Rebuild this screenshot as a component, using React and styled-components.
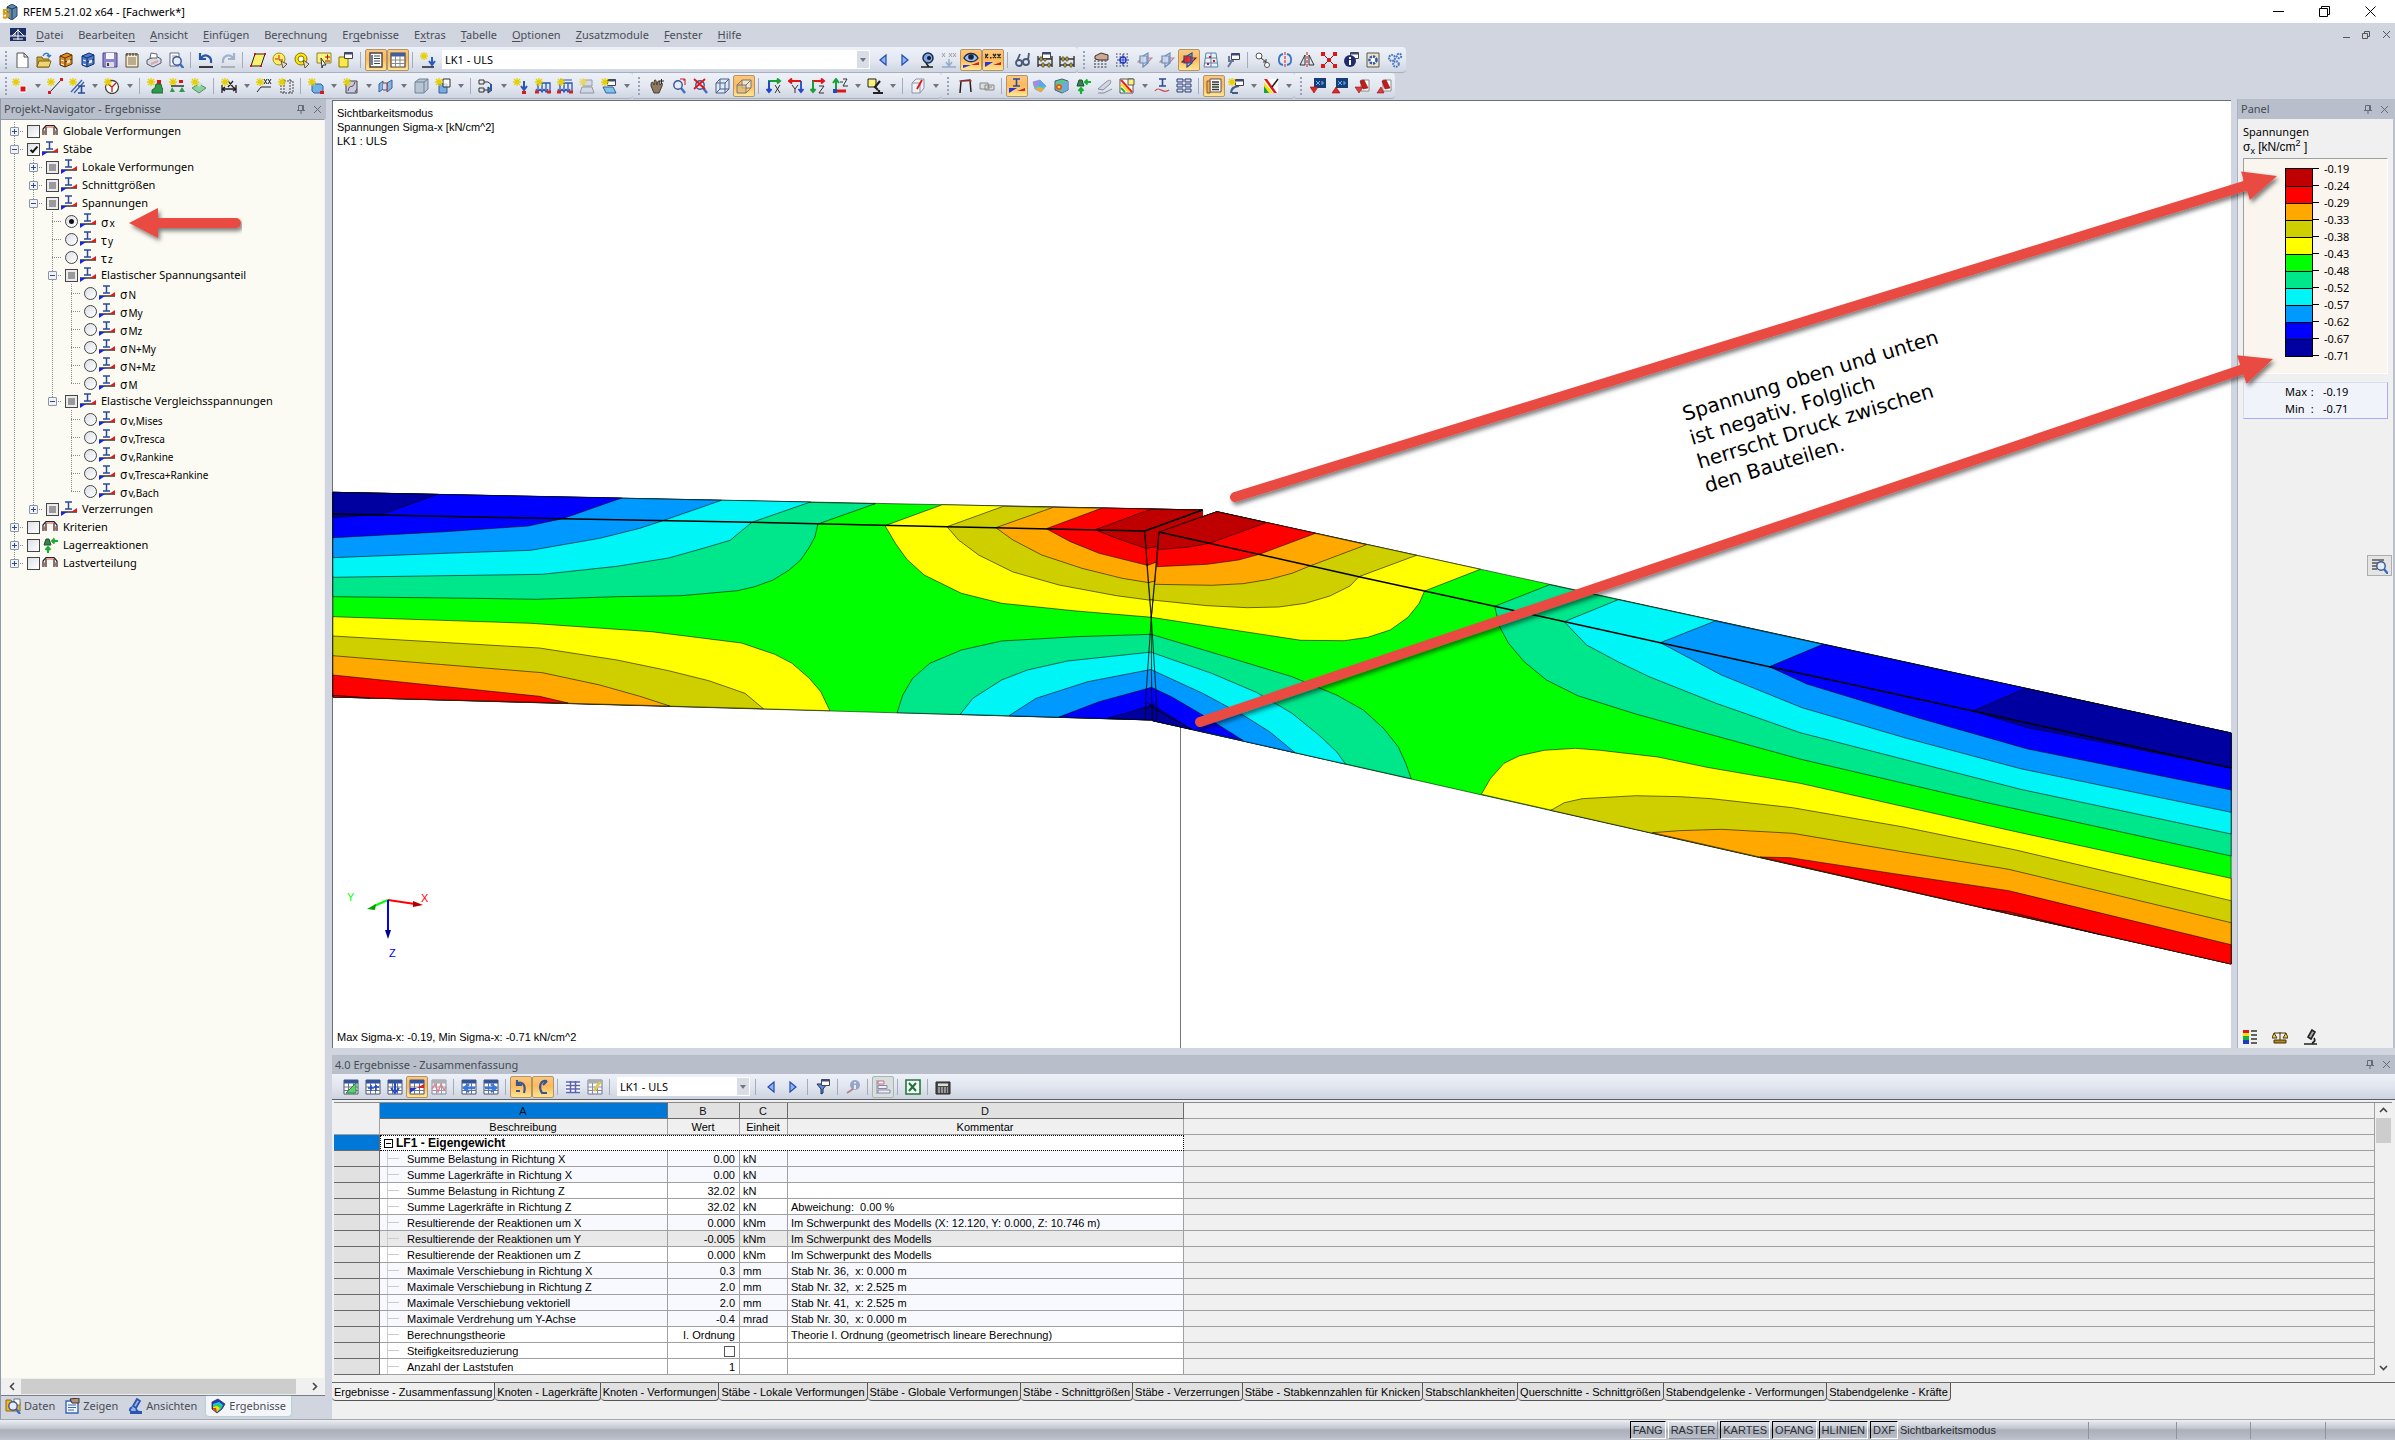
import React, { Fragment } from "react";
import styled, { createGlobalStyle, css } from "styled-components";

const UI = '"Noto Sans", "Open Sans", sans-serif';
const ARIAL = '"Liberation Sans", Arial, sans-serif';

const Global = createGlobalStyle`
  *, *::before, *::after { box-sizing: border-box; }
  html, body, #root { height: 100%; }
  body { margin: 0; overflow: hidden; background: #d0d5df; font: 11px/16px ${UI}; color: #111; }
  button, input, select { font: inherit; color: inherit; margin: 0; padding: 0; }
`;

/* ---------- icons ---------- */

const Star = () => <path d="M4 0v8M0 4h8M1 1l6 6M7 1l-6 6" stroke="#e6cf00" strokeWidth="1.3" fill="none" />;
const Ibeam = ({ x = 0, y = 0 }) => <path transform={`translate(${x} ${y})`} d="M0 0h7M3.5 0v7M0 7h7" stroke="#2b4a9a" strokeWidth="1.6" fill="none" />;
const Lens = ({ x = 8, y = 7 }) => (
  <g>
    <path d={`M${x + 3} ${y + 3}l4 5`} stroke="#3d6fc8" strokeWidth="2.4" />
    <circle cx={x} cy={y} r="4.2" fill="#e4edfb" stroke="#3b5596" strokeWidth="1.4" />
  </g>
);
const Grid = ({ hot = "#33549c" }) => (
  <g>
    <path d="M1 1h14v14H1z" fill="#fff" stroke="#4a5670" />
    <path d="M1 1h14v3.500H1z" fill={hot} />
    <path d="M1 8h14M1 11.500h14M5.500 4v11M10.500 4v11" stroke="#69748c" strokeWidth="1" />
  </g>
);
const Axes = ({ a, b }) => (
  <g fill="none" strokeWidth="2">
    <path d="M2 3h12M11 0.500l3 2.500-3 2.500" stroke={a} />
    <path d="M3 3v11M0.500 11l2.500 3 2.500-3" stroke={b} />
  </g>
);
const Load = () => (
  <g fill="none" strokeWidth="1.3">
    <path d="M3 5h12v8M3 5v8M7 5v8M11 5v8" stroke="#2a55b8" />
    <path d="M1 11l2 3 2-3M5 11l2 3 2-3M9 11l2 3 2-3" stroke="#2a55b8" />
    <path d="M0 14h4M12 14h4" stroke="#d42020" strokeWidth="3" />
  </g>
);
const Window = ({ x = 7, y = 0 }) => (
  <g transform={`translate(${x} ${y})`}>
    <path d="M.5 .5h8v6h-8z" fill="#fff" stroke="#444" />
    <path d="M.5 .5h8v2h-8z" fill="#3c4a78" />
  </g>
);
const Cabinet = ({ c, d }) => (
  <g>
    <path d="M2 4l7-3 5 2v9l-7 3-5-2z" fill={c} stroke={d} />
    <path d="M7 6l7-3M7 6v9M2 4l5 2M7 10l7-3" stroke={d} fill="none" />
    <path d="M3 8l3 1M3 12l3 1" stroke="#fff" />
    <path d="M9 8.500l3-1v3l-3 1z" fill="#f4e6d0" />
  </g>
);
const Planes = ({ hot, dim }) => (
  <g opacity={dim ? 0.6 : 1} strokeWidth="1.2" fillOpacity=".85">
    <path d="M1 10l4-4h10l-4 4z" fill={hot ? "#f0a8a0" : "#f0b8b0"} stroke={hot ? "#702020" : "#a05050"} />
    <path d="M6 4l5-3v10l-5 4z" fill={hot ? "#aecbf0" : "#c9dbef"} stroke="#284b8e" />
    <path d="M3 4h7v7H3z" fill={hot ? "#f01818" : "#bcd4f2"} stroke="#284b8e" />
  </g>
);
const Frame = () => (
  <g fill="none">
    <path d="M1 12V6l3-3.500h8L15 6v6" stroke="#222" strokeWidth="1.2" />
    <path d="M4 12V4M12 12V4" stroke="#222" strokeWidth="1.2" />
    <path d="M4 4h8M2 12l1-5M14 12l-1-5" stroke="#d45050" strokeWidth="1" />
  </g>
);
const Abacus = () => (
  <g>
    <path d="M1 15V4M15 15V4M1 7h14M1 13h14" stroke="#333" strokeWidth="1.4" fill="none" />
    <path d="M3 5h2v4H3zM7 5h2v4H7zM11 11h2v4h-2zM5 11h2v4H5z" fill="#e9c91c" stroke="#3a3a3a" strokeWidth=".7" />
  </g>
);
const Module = ({ up }) => (
  <g>
    <path d="M4 0h12v10H4z" fill="#173d78" />
    <path d="M6 3l4 4M10 3l-4 4M12 3v4M12 5h2" stroke="#67b5f0" fill="none" />
    <path d={up ? "M0 15l4-6 4 6z" : "M0 9h8l-4 6z"} fill="#e02525" stroke="#8d1111" strokeWidth=".6" />
  </g>
);
const Pdf = ({ up }) => (
  <g>
    <path d="M7 2h8v11H7z" fill="#fff" stroke="#888" />
    <path d="M6 3l4-1 4 8-5 1z" fill="#c81818" stroke="#7c0d0d" strokeWidth=".6" />
    <path d={up ? "M1 15l4-6 3 6z" : "M1 9h8l-4 6z"} fill="#e03a3a" stroke="#8d1111" strokeWidth=".6" />
  </g>
);
const Surface = ({ c = "#6fb2e6" }) => <path d="M4 6h9l2 2v7H6l-2-2z" fill={c} stroke="#33619b" />;
const Tri = ({ left }) => <path d={left ? "M11 3v10L5 8z" : "M5 3v10l6-5z"} fill="#8fb4f4" stroke="#1f4bb0" strokeWidth="1.2" />;

const ICONS = {
  app: <g><path d="M5 3l5-3 5 3v9l-5 4-5-3z" fill="#5f87ad" stroke="#2a4664" /><path d="M5 3l5 2v10M10 5l5-2" stroke="#223a54" fill="none" /><path d="M7 6H2v4c3-2 5 0 4 2s-3 2-5 1" stroke="#d99a10" strokeWidth="2.200" fill="none" /></g>,
  mdi: <g><path d="M0 1h16v13H0z" fill="#1c2f66" /><path d="M0 9h16M8 2v11M8 3L2 9M8 3l6 6M5 6v3M3 12h10" stroke="#fff" fill="none" /></g>,
  fresh: <path d="M3 1h7l4 4v11H3zM10 1v4h4" fill="#fff" stroke="#555" />,
  open: <g><path d="M1 5h5l1 2h6v8H1z" fill="#caa63a" stroke="#7d6514" /><path d="M3 9h12l-2 6H1z" fill="#f0d476" stroke="#7d6514" /><path d="M7 4c2-4 6-3 6 0M11 3l2 2 2-2" stroke="#3a79c8" strokeWidth="1.500" fill="none" /></g>,
  boxO: <Cabinet c="#dd8c28" d="#5f3306" />,
  boxB: <Cabinet c="#4a7ad0" d="#14306e" />,
  save: <g><path d="M1 1h14v14H1z" fill="#8d86cc" stroke="#4c458a" /><path d="M4 1h8v6H4z" fill="#f5f5fb" /><path d="M4 10h8v5H4z" fill="#dcdce8" /><path d="M5 11h2v3H5z" fill="#444" /></g>,
  notes: <g><path d="M2 2h12v13H2z" fill="#f7ecd0" stroke="#5a4b30" /><path d="M4 6h8M4 8h8M4 10h8M4 12h8" stroke="#7c6c4c" /><path d="M3 1v3M6 1v3M9 1v3M12 1v3" stroke="#333" /></g>,
  print: <g><path d="M1 8l9-4 5 3v4l-8 4-6-3z" fill="#d8dae4" stroke="#55586a" /><path d="M4 6l1-5 6 1 0 4z" fill="#fff" stroke="#666" /><path d="M5 12l7-3" stroke="#d8a8a8" strokeWidth="2" /></g>,
  preview: <g><path d="M2 1h9v13H2z" fill="#fff" stroke="#667" /><path d="M4 4h5M4 6h5" stroke="#999" /><Lens x={9} y={9} /></g>,
  undo: <g><path d="M2 1v6h6M3 6c4-5 11-2 10 5" fill="none" stroke="#2456a8" strokeWidth="2.200" /><path d="M1 15h14" stroke="#111" strokeWidth="1.600" /></g>,
  redo: <g opacity=".55"><path d="M14 1v6H8M13 6C9 1 2 4 3 11" fill="none" stroke="#6b86b0" strokeWidth="2.200" /><path d="M1 15h14" stroke="#777" strokeWidth="1.600" /></g>,
  para: <g><path d="M5 2h10l-4 12H1z" fill="#fbf06e" stroke="#222" /><path d="M4 1h2v2H4zM14 1h2v2h-2zM10 13h2v2h-2zM0 13h2v2H0z" fill="#e01515" /></g>,
  spot: <g><circle cx="7" cy="7" r="6" fill="#fdf169" stroke="#a18d00" /><path d="M7 3v5h4M3 7h3" stroke="#e01515" fill="none" /><path d="M9 9l6 3-4 4z" fill="#eed8c0" stroke="#554" /></g>,
  ring: <g><circle cx="7" cy="7" r="6" fill="#ffe600" stroke="#8a7900" /><circle cx="7" cy="7" r="3" fill="#fff" stroke="#8a7900" /><path d="M9 8l6 4-4 4z" fill="#eed8c0" stroke="#554" /></g>,
  selWin: <g><path d="M1 1h14v10H1z" fill="#fbf27c" stroke="#8c8230" /><path d="M5 6l5 7-3 0-1 3z" fill="#fff" stroke="#333" /><path d="M9 5h5M11.500 2.500v5M9 9h5" stroke="#b01010" /></g>,
  selCopy: <g><path d="M1 5h9v10H1z" fill="#fbe94c" stroke="#857400" /><Window x={6} y={0} /></g>,
  navOn: <g><path d="M2 1h12v14H2z" fill="#fff" stroke="#444" strokeWidth="1.400" /><path d="M4 3v10" stroke="#38508c" strokeWidth="1.500" /><path d="M6 4h6M6 6.500h6M6 9h6M6 11.500h6" stroke="#444" /></g>,
  tabOn: <g><path d="M1 1h14v14H1z" fill="#fff" stroke="#444" strokeWidth="1.200" /><path d="M1 1h14v3.500H1z" fill="#3d5fa5" /><path d="M1 8h14M1 11.500h14M5.500 4v11M10 4v11" stroke="#888" /></g>,
  newLoad: <g><Star /><path d="M12 5v7M9 9l3 4 3-4" stroke="#2a5bc0" strokeWidth="2" fill="none" /><path d="M2 15h12" stroke="#222" strokeWidth="1.500" /></g>,
  prev: <Tri left />,
  next: <Tri />,
  eyeTool: <g><circle cx="9" cy="6" r="5" fill="#7ea6e0" stroke="#1d2c50" strokeWidth="1.500" /><circle cx="10" cy="6" r="2" fill="#10182c" /><path d="M7 11l3 4M2 15h12" stroke="#222" strokeWidth="1.600" /></g>,
  xxDim: <g opacity=".5"><path d="M1 1l3 4M4 1L1 5M8 1l3 4M11 1L8 5M12 1l3 4M15 1l-3 4" stroke="#555" /><path d="M8 7v6M5 10l3 4 3-4M1 15h14" stroke="#5577aa" strokeWidth="1.500" fill="none" /></g>,
  eye: <g><path d="M1 6c3-6 11-6 14 0-3 5-11 5-14 0z" fill="#9bc0f2" stroke="#1d2c50" strokeWidth="1.400" /><circle cx="8" cy="5" r="2.800" fill="#14223f" /><path d="M0 16v-3h8z" fill="#2a34d0" /><path d="M8 13l8-3v3z" fill="#d82020" /></g>,
  xx: <g><path d="M0 2l3 4M3 2L0 6M8 2l3 4M11 2L8 6M12.500 2l3 4M15.500 2l-3 4" stroke="#222" strokeWidth="1.300" /><path d="M5 5h1.500v1.500H5z" fill="#222" /><path d="M0 15v-5h8z" fill="#2a34d0" /><path d="M8 13l8-3v3z" fill="#d82020" /></g>,
  glasses: <g fill="none" stroke="#4a5878" strokeWidth="1.800"><circle cx="4" cy="11" r="3" /><circle cx="11" cy="10" r="3" /><path d="M2 9l3-7M13 8l1-7" /></g>,
  abacusW: <g><Abacus /><Window x={5} y={0} /></g>,
  abacus: <Abacus />,
  gridHand: <g><path d="M1 9h14M1 12h14M1 15h14" stroke="#333" strokeDasharray="2 1.500" /><path d="M2 4l6-3 7 2v5H6L2 7z" fill="#d0a890" stroke="#333" /></g>,
  gridDot: <g><path d="M1 2h14M1 5h14M1 11h14M1 14h14" stroke="#333" strokeDasharray="1.500 2" /><circle cx="8" cy="8" r="3" fill="#fff" stroke="#1c35c8" strokeWidth="1.400" /><path d="M8 2v12M2 8h12" stroke="#1c35c8" /></g>,
  pl1: <Planes dim />,
  pl2: <Planes dim />,
  plHot: <Planes hot />,
  gridRed: <g><path d="M3 1h10l2 14H1zM8 1v14M2 6h12M2 11h13" fill="#e8f0f8" stroke="#5a85a8" /><path d="M6 4h2v2H6zM10 8h2v2h-2zM4 11h2v2H4z" fill="#e01515" /></g>,
  wrenchW: <g><path d="M3 15l5-8M4 4v5h5" stroke="#667a9c" strokeWidth="2" fill="none" /><Window x={6} y={1} /></g>,
  copyObj: <g fill="#fff" stroke="#555"><circle cx="4" cy="4" r="3" /><circle cx="12" cy="13" r="2.500" /><path d="M6 6l5 4M11 7v3H8" fill="none" stroke="#333" /></g>,
  rotObj: <g fill="none"><path d="M6 2C1 3 0 12 6 13M10 2c5 1 6 10 0 11" stroke="#3b74c4" strokeWidth="1.800" /><path d="M8 0v16" stroke="#d01515" strokeDasharray="3 1" /></g>,
  mirror: <g fill="none"><path d="M6 3v10H1zM10 3v10h5z" stroke="#333" /><path d="M8 0v16" stroke="#d01515" strokeDasharray="3 1" /></g>,
  cross: <g><path d="M2 2l12 12M14 2L2 14" stroke="#333" /><path d="M0 0h4v4H0zM12 0h4v4h-4zM0 12h4v4H0zM12 12h4v4h-4zM6 6h4v4H6z" fill="#e01515" /></g>,
  infoW: <g><Window x={7} y={0} /><circle cx="7" cy="9" r="6" fill="#222a6e" /><path d="M7 5v2M7 8v5" stroke="#fff" strokeWidth="2" /></g>,
  gearDoc: <g><path d="M2 1h12v14H2z" fill="#f0e2c8" stroke="#555" /><circle cx="8" cy="8" r="3.500" fill="#fff" stroke="#2b57a8" strokeWidth="2.500" strokeDasharray="2.200 1" /></g>,
  gears: <g fill="none" stroke="#4a78c4" strokeWidth="2" strokeDasharray="1.800 .8"><circle cx="5" cy="6" r="3" /><circle cx="12" cy="4" r="2.300" /><circle cx="9" cy="12" r="2.800" /></g>,
  node: <g><Star /><path d="M8 8h6v6H8z" fill="#d81818" stroke="#fff" /></g>,
  line: <g><Star /><path d="M3 14L14 2" stroke="#222" /><path d="M1 13h3v3H1zM13 0h3v3h-3z" fill="#e01515" /></g>,
  member: <g><Star /><path d="M2 14L13 2M5 15L15 4" stroke="#3a62b5" strokeWidth="1.300" /><Ibeam x={9} y={8} /></g>,
  circle: <g><circle cx="8" cy="9" r="6.500" fill="#fff" stroke="#444" strokeWidth="1.300" /><path d="M8 9l4-4M8 9L4 6M8 9v5" stroke="#d01515" strokeWidth="1.300" /><Star /></g>,
  support: <g><Star /><path d="M10 2h4v4h-4z" fill="#e01515" /><path d="M9 6l5 0 1 4 1 1v4H5v-3l3-2z" fill="#2f9a4a" stroke="#1d6a31" /></g>,
  lineSup: <g><Star /><path d="M2 8h13" stroke="#333" strokeWidth="1.500" /><path d="M3 9l-2 5h5zM13 9l-3 5h6z" fill="#2f9a4a" /><path d="M10 2h4v3h-4z" fill="#e01515" /></g>,
  found: <g><path d="M1 10l7-4 7 4-7 5z" fill="#8ed19c" stroke="#4d9560" /><path d="M5 6l3-2 4 2-4 3z" fill="#c8dced" /><Star /></g>,
  dimX: <g><path d="M1 15V7M15 15V7M1 11h14M4 9l-3 2 3 2M12 9l3 2-3 2M7 3l5 6M12 3L7 9" stroke="#222" fill="none" strokeWidth="1.300" /><Star /></g>,
  dimXX: <g><Star /><path d="M1 14l4-5h10M8 1l3 5M11 1L8 6M12 1l3 5M15 1l-3 5" stroke="#222" fill="none" /></g>,
  box: <g><path d="M3 3h12v12H3zM6 1v15M12 1v15" stroke="#444" strokeDasharray="2 1" fill="none" /><Star /></g>,
  surf: <g><Surface /><Star /><path d="M12 13h4v3h-4z" fill="#e01515" /></g>,
  surf2: <g><path d="M3 3h11v12H3z" fill="#b8d0e8" stroke="#444" /><path d="M5 13c2-9 4 0 7-9M12 14l2-3" stroke="#c02020" fill="none" /><Star /></g>,
  open3: <g><path d="M1 6l4-3v8l-4 3zM9 5l5-3v8l-5 4z" fill="#8ab4e0" stroke="#33619b" /><path d="M5 5h4v7H5" fill="#cfe0f2" stroke="#a03030" /></g>,
  solid: <path d="M2 4l4-3h9v10l-4 4H2zM2 4h9v11M11 4l4-3" fill="#b6c4d4" stroke="#70839a" />,
  solidN: <g><path d="M4 6h8v9H4z" fill="#78ace0" stroke="#33619b" /><path d="M8 1h7v8H8z" fill="#fff" fillOpacity=".7" stroke="#333" /><Star /></g>,
  release: <g fill="none" stroke="#333"><path d="M1 2h5v4H1zM6 4h4l4 3M1 10h5v4H1zM6 12h5" /><path d="M10 9l4 3-4 3z" fill="#4a7ad0" /><path d="M13 6v6" stroke="#2a55b8" strokeWidth="2" /></g>,
  nodeLoad: <g><Star /><path d="M11 3v8M8 8l3 4 3-4" stroke="#2a55b8" strokeWidth="2" fill="none" /><path d="M9 13h4v3H9z" fill="#e01515" /></g>,
  load1: <g><Load /><Star /></g>,
  load2: <g><Load /><path d="M3 2h12" stroke="#2a55b8" /><Star /></g>,
  load3: <g opacity=".6"><path d="M4 2h9v6H4zM3 9h10l2 6H1z" fill="#c8d4e0" stroke="#667" /><Star /></g>,
  load4: <g><path d="M2 9h10l3 6H5z" fill="#7fc3ee" stroke="#33619b" /><Window x={6} y={1} /><Star /></g>,
  hand: <g><path d="M3 8c0-5 2-5 3-1 0-7 2-7 3 0 1-6 3-5 3 0 2-3 3-2 2 1l-3 7H6z" fill="#8c7a62" stroke="#4a3d2c" /><path d="M11 3h5M13.500 1v5" stroke="#222" /></g>,
  zoomIn: <g><Lens /><path d="M10 1h5v6M13 2h2" stroke="#d01515" fill="none" /></g>,
  zoomX: <g><Lens /><path d="M2 1l11 10M13 1L2 11" stroke="#e01515" strokeWidth="1.800" /></g>,
  cube: <path d="M2 5h9v10H2zM2 5l4-4h9v10l-4 4M11 5l4-4M6 1v10h9M6 11l-4 4" fill="#dfe8f5" stroke="#4a5f88" />,
  cubeHot: <g><path d="M6 2h9v8H6z" fill="#f0e6cc" stroke="#777" /><path d="M1 7h9v8H1zM1 7l5-5M10 7l5-5M10 15l5-5" fill="#d9b878" fillOpacity=".7" stroke="#777" /></g>,
  axX: <g><Axes a="#18a038" b="#2148c8" /><path d="M9 7l5 8M14 7l-5 8" stroke="#333" /></g>,
  axY: <g><path d="M1 3h12M4 0.500L1 3l3 2.500" stroke="#e01515" strokeWidth="2" fill="none" /><path d="M4 7l3 4 3-4M7 11v4" stroke="#333" fill="none" /><path d="M13 3v11M10.500 11l2.500 3 2.500-3" stroke="#2148c8" strokeWidth="1.800" fill="none" /></g>,
  axZ: <g><Axes a="#e01515" b="#18a038" /><path d="M9 8h5l-5 7h5" stroke="#333" fill="none" /></g>,
  axMZ: <g><path d="M4 14V2M1 5l3-4 3 4" stroke="#18a038" strokeWidth="2" fill="none" /><path d="M3 13h11" stroke="#e01515" strokeWidth="3" /><path d="M8 4h3M11 1h4l-4 7h5" stroke="#333" fill="none" /><path d="M1 11h4v4H1z" fill="#2148c8" /></g>,
  scope: <g><path d="M1 1h8v8H1z" fill="#fbf27c" stroke="#222" /><path d="M13 3L8 9l3 3M6 15h10M12 12v3" stroke="#222" strokeWidth="2.200" fill="none" /></g>,
  clip: <g><path d="M2 5h8v10H2zM2 5l4-4h8v9l-4 5" fill="#f0f2f6" stroke="#8a94a8" /><path d="M12 2L7 11" stroke="#e01515" strokeWidth="1.800" /></g>,
  frameT: <g fill="none" stroke="#222" strokeWidth="1.500"><path d="M3 15L4 3l9-1 1 12" /><path d="M2 3l13 0" stroke="#d04040" strokeWidth="1" /></g>,
  tag: <path d="M1 5h8l1 6H1zM6 7h9v5H6zM8 9h5" fill="#dcdcdc" stroke="#888" />,
  member3: <g><Ibeam x={4} y={1} /><path d="M0 15v-5h8z" fill="#2a34d0" /><path d="M8 13l8-3v3z" fill="#d82020" /></g>,
  surfC: <g><path d="M2 4l7-2 6 6-5 6-6-3z" fill="#4ad0b8" stroke="#9a8fc0" strokeWidth=".8" /><path d="M2 4l7-2-2 6-4 1z" fill="#a888e0" /><path d="M9 2l6 6-4 1-4-1z" fill="#58a8f0" /><path d="M4 11l4-2 5 2-3 3z" fill="#f0a838" /></g>,
  solidC: <g><path d="M2 3l7-2 6 2v9l-6 3-7-3z" fill="#58c890" stroke="#557" /><circle cx="6" cy="9" r="3" fill="#f04a28" /><circle cx="6" cy="9" r="1.300" fill="#ffe040" /><path d="M9 5l6-2v9l-6 3z" fill="#6fa8e8" fillOpacity=".8" /></g>,
  react: <g><path d="M2 8l2-6h3l2 6z" fill="#3b7f4c" stroke="#1d5030" /><path d="M10 4h6M12.500 1.500L10 4l2.500 2.500M6 16v-5M3.500 13L6 10l2.500 3" stroke="#16b030" strokeWidth="2" fill="none" /></g>,
  wings: <g opacity=".7"><path d="M1 11l8-7c4-3 6-2 4 2L6 12z" fill="#c8d0dc" stroke="#667" /><path d="M1 15h6l8-4" stroke="#667" fill="none" /></g>,
  result: <g><path d="M1 1h13v14H1z" fill="#fff" stroke="#555" /><path d="M2 2l11 12" stroke="#e82020" strokeWidth="2" /><path d="M2 6l8 8" stroke="#ffd800" strokeWidth="2" /><path d="M2 10l4 4" stroke="#22b040" strokeWidth="2" /><path d="M9 1h6v6H9z" fill="#fbf27c" stroke="#555" /></g>,
  ibend: <g><Ibeam x={5} y={1} /><path d="M1 13c4-6 8 4 14-1" stroke="#d05050" fill="none" strokeWidth="1.200" /></g>,
  stack: <g fill="#d4dcf0" stroke="#2d3c70"><path d="M1 1h6v3H1zM9 1h6v3H9zM1 6h6v3H1zM9 6h6v3H9zM1 11h6v3H1zM9 11h6v3H9z" /></g>,
  listHot: <g><path d="M4 1h11v13H4z" fill="#fff" stroke="#555" /><path d="M1 3h3v12H1z" fill="#f0b040" stroke="#854" /><path d="M6 4h7M6 6.500h7M6 9h7M6 11.500h7" stroke="#333" strokeWidth="1.300" /></g>,
  pen: <g><path d="M3 15c0-5 3-6 8-7M4 15h6" stroke="#445a88" strokeWidth="2.200" fill="none" /><Window x={7} y={1} /><Star /></g>,
  rainbow: <g><path d="M1 1h14v14H1z" fill="#fff" /><path d="M1 1h3l10 14h-3z" fill="#e01515" /><path d="M1 4v4l5 7h4z" fill="#ffe000" /><path d="M1 8v7h5z" fill="#18a038" /><path d="M9 9l6-8" stroke="#222" strokeWidth="1.500" /></g>,
  mod1: <Module />,
  mod2: <Module up />,
  pdf1: <Pdf />,
  pdf2: <Pdf up />,
  tEdit: <g><Grid /><path d="M13 4v10H3z" fill="#5fd070" stroke="#2b8a3c" /></g>,
  tPlus: <g><Grid /><path d="M3 9h6M6 6v6M11 6v6M9 8h5" stroke="#2148c8" strokeWidth="1.500" /></g>,
  tDown: <g><Grid /><path d="M8 4v8M4 9l4 5 4-5" stroke="#2148c8" strokeWidth="2" fill="none" /></g>,
  tRes: <g><Grid /><path d="M1 14V9h7z" fill="#2a34d0" /><path d="M8 9l7-4v4z" fill="#d82020" /></g>,
  tWave: <g opacity=".6"><Grid hot="#888" /><path d="M1 10l3-5 3 8 3-8 3 6 2-3" stroke="#e04040" strokeWidth="1.300" fill="none" /></g>,
  tLeft: <g><Grid /><path d="M14 9H4M8 5L3 9l5 4" stroke="#3a78e0" strokeWidth="2.400" fill="none" /></g>,
  tRight: <g><Grid /><path d="M2 9h10M8 5l5 4-5 4" stroke="#3a78e0" strokeWidth="2.400" fill="none" /></g>,
  hook1: <path d="M4 5c6-4 9 2 7 9M4 1v5h5M3 12h4" stroke="#3a5690" strokeWidth="2.200" fill="none" />,
  hook2: <path d="M12 2C4 1 4 9 7 14h5M8 6l4-4" stroke="#3a5690" strokeWidth="2.200" fill="none" />,
  tRows: <g><path d="M1 2h14v12H1z" fill="#fff" /><path d="M1 3h14M1 6.500h14M1 10h14M1 13.500h14M5.500 2v12M10.500 2v12" stroke="#5a64b0" strokeWidth="1.500" /></g>,
  tPen: <g opacity=".75"><Grid hot="#999" /><path d="M13 3L7 12" stroke="#e0c020" strokeWidth="3" /></g>,
  filter: <g><path d="M2 5h10L8 10v4l-2 1v-5z" fill="#5b8de6" stroke="#1d2c50" /><Window x={6} y={0} /></g>,
  infoDim: <g opacity=".6"><circle cx="10" cy="6" r="5" fill="#6878b0" /><path d="M10 3v1.500M10 6v4" stroke="#fff" strokeWidth="1.800" /><path d="M2 14l6-4" stroke="#a04040" strokeWidth="1.600" /></g>,
  bars: <g fill="#eef" stroke="#8a8a9c"><path d="M2 1v14" /><path d="M3 2h6v3H3z" stroke="#c07080" /><path d="M3 6.500h9v3H3zM3 11h12v3H3z" /></g>,
  excel: <g><path d="M1 1h14v14H1z" fill="#fff" stroke="#1d7a38" strokeWidth="1.600" /><path d="M4 4l7 8M11 4l-7 8" stroke="#1d7a38" strokeWidth="2.200" /></g>,
  calc: <g><path d="M1 3h14v12H1z" fill="#4c4c50" stroke="#222" /><path d="M3 4.500h10v2.500H3z" fill="#d8e0d0" /><path d="M3 9h10M3 11h10M3 13h10" stroke="#ddd" strokeDasharray="2 1" /></g>,
  daten: <g><path d="M1 2h5l1 2h8v9H1z" fill="#f2b820" stroke="#94690a" /><path d="M9 1h6v6H9z" fill="#fff" stroke="#777" /><Lens x={8} y={8} /></g>,
  zeigen: <g><path d="M2 3h12v12H2z" fill="#f2f5fb" stroke="#3a66b8" strokeWidth="1.400" /><path d="M4 7h8M4 9.500h8M4 12h6" stroke="#3a66b8" /><path d="M6 1l9-1v5L8 5z" fill="#b58f78" stroke="#333" /></g>,
  ansichten: <path d="M10 1L6 8l3 2 4-7zM5 9c-4 3-2 5 2 5h8M3 15h12M9 11l2 3" stroke="#2c55b0" strokeWidth="1.800" fill="#8fb4f0" />,
  ergebnisse: <g><path d="M2 4l6-3 7 5-3 5-5 4-5-4z" fill="#2038c8" stroke="#333" strokeWidth=".8" /><path d="M3 6l6-2 4 3-2 4-4 3-4-3z" fill="#18c8e8" /><path d="M3 8l5-2 4 2-5 6-4-3z" fill="#2ad040" /><path d="M3 9l4-1 3 2-3 4-4-3z" fill="#ffe000" /><path d="M3 10l3 0 1 4-4-3z" fill="#f03018" /></g>,
  legend: <g><path d="M1 1h6v3H1z" fill="#e01515" /><path d="M1 4h6v3H1z" fill="#ffe000" /><path d="M1 7h6v4H1z" fill="#18b038" /><path d="M1 11h6v4H1z" fill="#2038c8" /><path d="M9 2h6M9 6h6M9 10h6M9 14h6" stroke="#333" strokeWidth="1.500" /></g>,
  scale: <g><path d="M2 11h12v3H2z" fill="#b08820" stroke="#4a3606" /><path d="M8 11V3M2 4h12M2 4L0 9h5zM14 4l-3 5h5z" fill="#f0d050" stroke="#4a3606" /></g>,
  micro: <path d="M10 1L6 8l3 2 4-7zM2 15h13M12 9c2 3 0 4-2 5" stroke="#222" strokeWidth="1.600" fill="#aaa" />,
  detail: <g><path d="M0 2h12M0 5h6M0 8h5M0 11h5" stroke="#555" strokeWidth="1.400" /><Lens x={9} y={8} /></g>,
  frame: <Frame />,
  bar: <g><path d="M4 1h7M7.500 1v7M4 8h7" stroke="#2b4a9a" strokeWidth="1.500" fill="none" /><path d="M0 11h16" stroke="#666" strokeWidth="2" /><path d="M0 15v-4h6z" fill="#1a24e0" /><path d="M10 11l6-4v4z" fill="#d82020" /></g>,
};

const IconSvg = styled.svg`
  display: block;
  flex: none;
  width: ${(p) => p.$s}px;
  height: ${(p) => p.$s}px;
`;
const Icon = ({ name, size = 16 }) => (
  <IconSvg $s={size} viewBox="0 0 16 16" fill="none" aria-hidden="true">{ICONS[name]}</IconSvg>
);

/* ---------- shell ---------- */

const Shell = styled.div`
  display: flex;
  flex-direction: column;
  height: 100vh;
  background: #d0d5df;
`;
const TitleBar = styled.header`
  display: flex;
  align-items: center;
  gap: 5px;
  height: 23px;
  padding: 0 2px;
  background: #fff;
  color: #000;
`;
const Spacer = styled.span`flex: 1;`;
const WinButtons = styled.div`display: flex;`;
const WinButton = styled.button`
  width: 46px;
  height: 22px;
  border: 0;
  background: none;
  display: grid;
  place-items: center;
`;
const MenuBar = styled.nav`
  display: flex;
  align-items: center;
  gap: 10px;
  height: 24px;
  padding: 0 4px 0 10px;
  color: #4a4d57;
`;
const MenuList = styled.div`
  flex: 1;
  display: flex;
  gap: 15px;
`;
const MenuItem = styled.a`
  color: inherit;
  text-decoration: none;
  line-height: 24px;
  u { text-underline-offset: 2px; }
`;
const ToolRow = styled.div`
  display: flex;
  height: 26px;
`;
const Strip = styled.div`
  display: flex;
  align-items: center;
  height: 26px;
  border-radius: 0 4px 4px 0;
  border-bottom: 1px solid #a9b0bd;
  background: linear-gradient(#eef1f8, #e2e7f0 55%, #d0d6e2);
`;
const Grip = styled.span`
  width: ${(p) => p.$w}px;
  height: 18px;
  background: repeating-linear-gradient(#9aa3b3 0 2px, transparent 2px 4px) 5px 0 / 2px 100% no-repeat;
`;
const Sep = styled.span`
  width: 8px;
  height: 16px;
  background: linear-gradient(#a4abb9, #a4abb9) 3px 0 / 1px 100% no-repeat;
`;
const ToolButton = styled.button`
  display: grid;
  place-items: center;
  width: 22px;
  height: 22px;
  border: 1px solid transparent;
  border-radius: 2px;
  background: none;
  ${(p) => p.$on === "hot" && css`
    border-color: #b39468;
    background: linear-gradient(#fbc87e, #fdb95c 45%, #ffe592);
  `}
  ${(p) => p.$on === "dim" && css`
    border-color: #a9b5b0;
    background: #d9dfde;
  `}
`;
const Drop = styled.button`
  width: 13px;
  height: 22px;
  border: 0;
  background: none;
  display: grid;
  place-items: center;
`;
const Combo = styled.label`
  display: flex;
  width: ${(p) => p.$w}px;
  height: 19px;
  margin: 0 2px 0 3px;
  background: #fff;
`;
const ComboSelect = styled.select`
  flex: 1;
  min-width: 0;
  appearance: none;
  border: 0;
  padding-left: 3px;
  background: #fff;
  color: #000;
`;
const ComboArrow = styled.span`
  width: 14px;
  display: grid;
  place-items: center;
  background: #d9dde6;
  border: 1px solid #fff;
`;
const Caret = () => (
  <svg width="6" height="4" viewBox="0 0 6 4" aria-hidden="true"><path d="M0 0h6L3 4z" fill="#70757f" /></svg>
);

const Tools = ({ items }) =>
  items.split(" ").map((t, i) => {
    if (t === "|") return <Sep key={i} />;
    if (t === "v") return <Drop key={i} aria-label="Auswahl"><Caret /></Drop>;
    const on = t.endsWith("*") ? "hot" : t.endsWith("~") ? "dim" : "";
    const name = t.replace(/[*~]$/, "");
    return <ToolButton key={i} $on={on} aria-label={name}><Icon name={name} /></ToolButton>;
  });

const LoadCase = ({ width, name }) => (
  <Combo $w={width}>
    <ComboSelect aria-label={name}><option>LK1 - ULS</option></ComboSelect>
    <ComboArrow><Caret /></ComboArrow>
  </Combo>
);

const MENU = [
  ["", "D", "atei"], ["Bearbeite", "n", ""], ["", "A", "nsicht"], ["", "E", "infügen"], ["Be", "r", "echnung"], ["Er", "g", "ebnisse"],
  ["E", "x", "tras"], ["", "T", "abelle"], ["", "O", "ptionen"], ["", "Z", "usatzmodule"], ["", "F", "enster"], ["", "H", "ilfe"],
];

/* ---------- docked panes ---------- */

const Main = styled.main`
  flex: 1;
  min-height: 0;
  display: flex;
  gap: 6px;
`;
const PaneHead = styled.div`
  display: flex;
  align-items: center;
  height: ${(p) => p.$h || 20}px;
  padding: 0 1px 0 3px;
  background: #b8bfca;
  color: #464b55;
`;
const HeadButton = styled.button`
  width: 16px;
  height: 16px;
  border: 0;
  background: none;
  display: grid;
  place-items: center;
`;
const PaneTitle = ({ children, h }) => (
  <PaneHead $h={h}>
    {children}
    <Spacer />
    <HeadButton aria-label="Fixieren">
      <svg width="8" height="9" viewBox="0 0 8 9" fill="none" stroke="#666b75"><path d="M1.500 .5h5v5h-5zM5.500 .5v5M0 5.500h8M4 6v3" /></svg>
    </HeadButton>
    <HeadButton aria-label="Schließen">
      <svg width="9" height="9" viewBox="0 0 9 9" stroke="#666b75"><path d="M1 1l7 7M8 1L1 8" /></svg>
    </HeadButton>
  </PaneHead>
);

const Navigator = styled.aside`
  width: 326px;
  flex: none;
  display: flex;
  flex-direction: column;
  border-left: 1px solid #8f99a8;
`;
const Tree = styled.ul`
  flex: 1;
  min-height: 0;
  list-style: none;
  margin: 0 1px 0 0;
  padding: 2px 0 0 4px;
  border-top: 1px solid #8f99ad;
  border-right: 1px solid #eef0f4;
  background: #fcfbf3;
  color: #000;
`;
const TreeRow = styled.li`
  display: flex;
  align-items: center;
  height: 18px;
`;
const dotsV = (h) => `repeating-linear-gradient(#8a8a8a 0 1px, transparent 1px 2px) 9px 0 / 1px ${h} no-repeat`;
const dotsH = "repeating-linear-gradient(90deg, #8a8a8a 0 1px, transparent 1px 2px) 9px 9px / 10px 1px no-repeat";
const Guide = styled.span`
  width: 19px;
  height: 18px;
  flex: none;
  display: grid;
  place-items: center;
  background: ${(p) => ({ line: dotsV("100%"), tee: `${dotsV("100%")}, ${dotsH}`, end: `${dotsV("9px")}, ${dotsH}`, gap: "none" }[p.$k])};
`;
const Expander = styled.button`
  width: 9px;
  height: 9px;
  border: 1px solid #8b95a5;
  border-radius: 1px;
  background:
    linear-gradient(#2b4a9a, #2b4a9a) 1px 3px / 5px 1px no-repeat,
    ${(p) => (p.$open ? "" : "linear-gradient(#2b4a9a, #2b4a9a) 3px 1px / 1px 5px no-repeat,")}
    #f2f3f6;
`;
const Check = styled.input`
  appearance: none;
  flex: none;
  width: 13px;
  height: 13px;
  margin: 0 2px 0 3px;
  border: 1px solid #454545;
  border-radius: ${(p) => (p.type === "radio" ? "50%" : "0")};
  background: ${(p) => (p.$mixed ? "linear-gradient(#9a9a9a, #9a9a9a) 2px 2px / 7px 7px no-repeat, #ececf0" : "linear-gradient(135deg, #dcdfe6, #fff)")};
  display: grid;
  place-items: center;
  &:checked::before {
    content: "";
    ${(p) => (p.type === "radio"
      ? "width: 5px; height: 5px; border-radius: 50%; background: #111;"
      : "width: 8px; height: 4px; border: solid #111; border-width: 0 0 2px 2px; transform: rotate(-48deg);")}
  }
`;
const TreeLabel = styled.label`
  display: flex;
  align-items: center;
  gap: 5px;
  white-space: nowrap;
  font-size: 12px;
  small { font-size: 11px; }
`;
const Sym = styled.span`
  padding-top: 3px;
  small { font-size: 10px; margin-left: 1px; }
`;

/* guides: i = vertical line, t = branch, l = last branch, a space = nothing */
const TREE = [
  ["t", "+", "Globale Verformungen", "off", "frame"],
  ["t", "-", "Stäbe", "on", "bar"],
  ["it", "+", "Lokale Verformungen", "mix", "bar"],
  ["it", "+", "Schnittgrößen", "mix", "bar"],
  ["it", "-", "Spannungen", "mix", "bar"],
  ["iit", "", "σ|x", "sel", "bar"],
  ["iit", "", "τ|y", "radio", "bar"],
  ["iit", "", "τ|z", "radio", "bar"],
  ["iit", "-", "Elastischer Spannungsanteil", "mix", "bar"],
  ["iiit", "", "σ|N", "radio", "bar"],
  ["iiit", "", "σ|My", "radio", "bar"],
  ["iiit", "", "σ|Mz", "radio", "bar"],
  ["iiit", "", "σ|N+My", "radio", "bar"],
  ["iiit", "", "σ|N+Mz", "radio", "bar"],
  ["iiil", "", "σ|M", "radio", "bar"],
  ["iil", "-", "Elastische Vergleichsspannungen", "mix", "bar"],
  ["ii t", "", "σ|v,Mises", "radio", "bar"],
  ["ii t", "", "σ|v,Tresca", "radio", "bar"],
  ["ii t", "", "σ|v,Rankine", "radio", "bar"],
  ["ii t", "", "σ|v,Tresca+Rankine", "radio", "bar"],
  ["ii l", "", "σ|v,Bach", "radio", "bar"],
  ["il", "+", "Verzerrungen", "mix", "bar"],
  ["t", "+", "Kriterien", "off", "frame"],
  ["t", "+", "Lagerreaktionen", "off", "react"],
  ["l", "+", "Lastverteilung", "off", "frame"],
];
const KIND = { i: "line", t: "tee", l: "end", " ": "gap" };

const NavTree = () => (
  <Tree>
    {TREE.map(([guides, exp, text, state, icon], i) => {
      const radio = state === "radio" || state === "sel";
      const [head, sub] = text.split("|");
      return (
        <TreeRow key={text}>
          {[...guides].map((g, k) => (
            <Guide key={k} $k={KIND[g]}>
              {exp && k === guides.length - 1 && <Expander $open={exp === "-"} aria-label={exp === "-" ? "Zuklappen" : "Aufklappen"} />}
            </Guide>
          ))}
          <Check
            id={`tree-${i}`}
            type={radio ? "radio" : "checkbox"}
            name={radio ? "stress" : undefined}
            $mixed={state === "mix"}
            defaultChecked={state === "on" || state === "sel"}
          />
          <TreeLabel htmlFor={`tree-${i}`}>
            <Icon name={icon} />
            {sub ? <Sym>{head}<small>{sub}</small></Sym> : <small>{head}</small>}
          </TreeLabel>
        </TreeRow>
      );
    })}
  </Tree>
);

const HScroll = styled.div`
  display: flex;
  align-items: center;
  height: 18px;
  margin-right: 1px;
  padding: 0 2px 0 3px;
  background: #f0f0f0;
  border-bottom: 1px solid #757c88;
`;
const ScrollThumb = styled.span`
  width: ${(p) => p.$w || "auto"};
  height: ${(p) => p.$h || "15px"};
  background: #cdcdcd;
`;
const ScrollBtn = styled.button`
  width: 17px;
  height: 15px;
  border: 0;
  background: none;
  display: grid;
  place-items: center;
`;
const Chevron = ({ d }) => (
  <svg width="9" height="9" viewBox="0 0 9 9" fill="none" stroke="#444" strokeWidth="1.600" aria-hidden="true"><path d={d} /></svg>
);
const NavTabs = styled.div`
  display: flex;
  align-items: flex-start;
  height: 23px;
  color: #4a4d57;
`;
const NavTab = styled.button`
  display: flex;
  align-items: center;
  gap: 3px;
  height: 20px;
  padding: 0 5px 0 4px;
  border: 0;
  background: none;
  ${(p) => p.$active && css`
    margin-left: 4px;
    background: #f4f5f8;
    border-radius: 0 0 3px 3px;
    box-shadow: 0 0 2px #7fc4c4;
  `}
`;

/* ---------- 3D view ---------- */

const Work = styled.div`
  flex: 1;
  min-width: 0;
  display: flex;
  flex-direction: column;
`;
const Upper = styled.div`
  flex: 1;
  min-height: 0;
  display: flex;
  gap: 6px;
`;
const View = styled.section`
  flex: 1;
  min-width: 0;
  position: relative;
  display: flex;
  flex-direction: column;
  justify-content: space-between;
  margin-top: 1px;
  border: solid #6b6f78;
  border-width: 1px 0 0 1px;
  background: #fff;
  font: 11px/14px ${ARIAL};
  color: #000;
`;
const ViewNote = styled.p`
  margin: 0;
  padding: 5px 4px 4px;
  white-space: pre-line;
`;
const Scene = styled.svg`
  position: absolute;
  top: 0;
  left: 0;
  z-index: 2;
  width: 1899px;
  height: 948px;
  overflow: visible;
  pointer-events: none;
`;

/* Each point carries the letter of its local survey frame:
   a = left beam, b = joint area, c = right beam end. */
const FRAMES = { a: [330, 460, 1568 / 900], b: [1100, 480, 2.24], c: [1650, 560, 1568 / 745] };
const pts = (list) =>
  list.trim().split(/\s+/).map((t) => {
    const [ox, oy, sx] = FRAMES[t[0]];
    const [x, y] = t.slice(1).split(",").map(Number);
    return `${(ox + x / sx).toFixed(1)},${(oy + y / 3).toFixed(1)}`;
  }).join(" ");

const C = { r0: "#be0000", r1: "#ff0000", or: "#ffa800", ol: "#cfcf00", ye: "#ffff00", gr: "#00ff00", te: "#00e68a", cy: "#00f6f6", lb: "#0099ff", bl: "#0000ff", db: "#0000a0" };

const TL = "a5,97";
const TR = "a1420,213 a1520,150";
const BL = "a5,711";
const BR = "a1432,780";
const JT = "b132,156 b262,95";
const JB = "b118,722";
const RT = "c1223,519";
const RB = "c1223,1212";

const BANDS = [
  ["gr", "a5,97 a1520,150 a1420,213 a1432,472 a1432,780 a5,711"],
  ["te", `${TL} a950,131 a850,192 a845,230 a835,262 a820,300 a800,330 a772,360 a740,380 a710,392 a612,407 a500,410 a360,418 a250,415 a5,410`],
  ["cy", `${TL} a837,126 a735,187 a697,241 a650,265 a590,294 a500,319 a370,343 a250,346 a5,352`],
  ["lb", `${TL} a682,121 a580,182 a540,205 a470,235 a350,271 a200,280 a5,293`],
  ["bl", `${TL} a508,114 a405,176 a345,198 a200,215 a5,233`],
  ["db", `${TL} a188,103 a90,163 a50,167 a5,173`],
  ["ye", `a1067,134 a967,197 a985,250 a1005,298 a1035,345 a1100,400 a1170,430 a1300,453 a1432,472 ${TR}`],
  ["ol", `a1173,139 a1075,200 a1095,240 a1130,285 a1190,336 a1270,375 a1370,407 a1430,421 ${TR}`],
  ["or", `a1260,142 a1160,203 a1190,240 a1240,285 a1310,325 a1380,355 a1427,368 ${TR}`],
  ["r1", `a1345,144 a1248,206 a1290,245 a1340,280 a1424,316 ${TR}`],
  ["r0", `a1430,148 a1333,209 a1370,235 a1421,265 ${TR}`],
  ["ye", `a5,470 a350,490 a560,515 a717,549 a775,583 a805,610 a835,655 a855,695 a871,752 ${BL}`],
  ["ol", `a5,528 a365,564 a500,600 a590,632 a660,662 a723,700 a755,746 ${BL}`],
  ["or", `a5,587 a370,638 a470,675 a540,709 a592,738 ${BL}`],
  ["r1", `a5,645 a365,709 a415,729 ${BL}`],
  ["te", `a988,758 a998,705 a1015,655 a1045,610 a1100,570 a1170,543 a1300,530 a1432,523 ${BR}`],
  ["cy", `a1098,763 a1120,715 a1170,660 a1215,630 a1285,603 a1432,576 ${BR}`],
  ["lb", `a1183,767 a1230,715 a1320,665 a1432,628 ${BR}`],
  ["bl", `a1270,771 a1340,725 a1432,682 ${BR}`],
  ["db", `a1355,775 a1400,752 a1432,735 ${BR}`],
  ["gr", `${JT} ${RT} ${RB} ${JB} b115,412`],
  ["ye", `b852,268 b727,333 b715,370 b690,412 b650,450 b600,472 b547,482 b450,481 b280,446 b115,412 ${JT}`],
  ["ol", `b709,226 b580,290 b560,318 b515,348 b460,370 b400,381 b330,383 b240,377 b117,360 ${JT}`],
  ["or", `b597,194 b470,258 b430,280 b380,298 b320,311 b250,316 b122,313 ${JT}`],
  ["r1", `b483,160 b357,223 b310,240 b240,253 b127,260 ${JT}`],
  ["r0", `b372,128 b245,190 b200,201 b130,209 ${JT}`],
  ["te", `b115,463 b300,537 b430,590 b530,645 b590,690 b635,745 b668,800 b685,850 b697,896 ${JB}`],
  ["cy", `b115,517 b250,580 b350,637 b430,700 b490,765 b530,815 b550,852 ${JB}`],
  ["lb", `b115,569 b230,640 b320,705 b380,755 b437,818 ${JB}`],
  ["bl", `b115,622 b160,650 b230,705 b320,781 ${JB}`],
  ["db", `b118,675 b160,710 b205,748 ${JB}`],
  ["te", `b1007,314 b884,379 b895,440 b915,490 b950,545 b1000,600 b1070,647 b1200,702 c315,597 c700,725 c1223,888 ${RT}`],
  ["cy", `b1161,359 b1040,425 b1090,495 b1160,545 b1230,590 b1380,670 c316,518 c780,688 c1223,822 ${RT}`],
  ["lb", `b1378,423 b1255,488 c150,345 c320,443 c540,535 c780,626 c1223,757 ${RT}`],
  ["bl", `c364,253 c251,320 c330,372 c560,472 c795,567 c1223,690 ${RT}`],
  ["db", `c790,385 c680,453 c795,503 c1000,560 c1223,624 ${RT}`],
  ["ye", `b854,943 b875,895 b905,850 b940,827 b995,811 b1065,805 b1120,811 b1250,831 c120,622 c316,670 c770,815 c1223,955 ${RB}`],
  ["ol", `b1010,991 b1040,968 b1080,956 b1200,947 b1300,950 c130,716 c300,743 c530,800 c770,870 c1223,1022 ${RB}`],
  ["or", `c5,818 c60,812 c150,808 c300,820 c530,875 c755,928 c1223,1088 ${RB}`],
  ["r1", `c232,891 c295,893 c500,938 c755,992 c1223,1154 ${RB}`],
  ["r0", "b100,152 b230,91 b230,108 b132,156 b129,209 b103,205"],
  ["r1", "b103,205 b129,200 b127,255 b105,257"],
  ["or", "b105,257 b127,246 b123,305 b108,308"],
  ["ol", "b108,308 b123,303 b119,360 b111,360"],
  ["ye", "b111,360 b119,360 b115,412"],
];
const EDGES = [
  ["a5,162 a405,176 a735,187 a1075,200 a1420,213 a1520,150", 1.5],
  ["b132,156 b580,290 b884,379 b1255,488 c251,320 c680,453 c1223,624", 1.5],
  ["b100,152 b115,412 b102,665 b102,720", 0.8],
  ["b132,156 b115,412 b127,670 b127,718", 0.8],
  ["b103,665 b127,690 b205,748", 0.8],
  ["b102,690 b127,668", 0.8],
  ["c700,1045 c755,1055 c950,1125", 0.8],
  ["a5,706 a70,714", 0.8],
];

const Arrow = ({ from, to, head = 33, half = 15 }) => {
  const [x1, y1] = from;
  const [x2, y2] = to;
  const len = Math.hypot(x2 - x1, y2 - y1);
  const ux = (x2 - x1) / len;
  const uy = (y2 - y1) / len;
  const bx = x2 - ux * head;
  const by = y2 - uy * head;
  return (
    <g filter="url(#drop)" fill="#e94b43" stroke="none">
      <path d={`M${x1} ${y1}L${bx + ux * 2} ${by + uy * 2}`} stroke="#e94b43" strokeWidth="10" strokeLinecap="round" />
      <path d={`M${x2} ${y2}L${bx - uy * half} ${by + ux * half}L${bx + uy * half} ${by - ux * half}z`} />
    </g>
  );
};

const NoteText = styled.text`
  font: 20px "DejaVu Sans", Verdana, sans-serif;
  fill: #000;
`;
const AxisText = styled.text`font: 11px ${ARIAL};`;

const BeamScene = () => (
  <Scene viewBox="333 101 1899 948" role="img" aria-label="Spannungsverlauf Sigma-x am Stab">
    <defs>
      <filter id="drop" x="-5%" y="-20%" width="110%" height="150%">
        <feDropShadow dx="2" dy="3" stdDeviation="2" floodOpacity=".5" />
      </filter>
    </defs>
    <path d="M1180.500 727V1048" stroke="#777" />
    <g stroke="#000" strokeWidth=".8" strokeOpacity=".7" strokeLinejoin="round">
      {BANDS.map(([c, p], i) => <polygon key={i} points={pts(p)} fill={C[c]} />)}
    </g>
    <g stroke="#000" fill="none">
      {EDGES.map(([p, w], i) => <polyline key={i} points={pts(p)} strokeWidth={w} />)}
    </g>
    <g fill="none" strokeWidth="2">
      <path d="M388 900l27 4" stroke="#f00" />
      <path d="M413 901l10 4-10 2z" fill="#b00000" />
      <path d="M388 900l-14 6" stroke="#0f0" />
      <path d="M376 904l-9 5 8 1z" fill="#00a000" />
      <path d="M388 900v31" stroke="#00f" />
      <path d="M385 930h6l-3 9z" fill="#0000a0" />
    </g>
    <AxisText x="347" y="901" fill="#0f0">Y</AxisText>
    <AxisText x="421" y="902" fill="#f00">X</AxisText>
    <AxisText x="389" y="957" fill="#00f">Z</AxisText>
    <Arrow from={[1235, 497]} to={[2277, 176]} />
    <Arrow from={[1200, 722]} to={[2273, 359]} />
    <Arrow from={[236, 223]} to={[129, 223]} head={29} />
    <g transform="translate(1685 421) rotate(-17)">
      <NoteText y="0">Spannung oben und unten</NoteText>
      <NoteText y="25">ist negativ. Folglich</NoteText>
      <NoteText y="50">herrscht Druck zwischen</NoteText>
      <NoteText y="75">den Bauteilen.</NoteText>
    </g>
  </Scene>
);

/* ---------- colour panel ---------- */

const SidePanel = styled.aside`
  width: 158px;
  flex: none;
  display: flex;
  flex-direction: column;
  background: #f0f0f0;
  border-left: 1px solid #a8b2c4;
  border-right: 2px solid #b9c0cc;
  color: #000;
`;
const PanelBody = styled.div`
  flex: 1;
  display: flex;
  flex-direction: column;
  padding: 2px 1px 0 5px;
`;
const PanelText = styled.p`margin: 3px 0 0;`;
const Unit = styled.p`
  margin: 0 0 3px;
  font: 12px/15px ${ARIAL};
  sub, sup { font-size: 9px; line-height: 0; }
`;
const Legend = styled.div`
  display: flex;
  gap: 5px;
  padding: 9px 0 16px 41px;
  margin-right: 4px;
  border: 1px solid #a0a0a0;
  border-color: #a0a0a0 #fff #fff #a0a0a0;
  background: #faf6ef;
`;
const Swatches = styled.div`
  width: 28px;
  border: 1px solid #000;
`;
const Swatch = styled.div`
  height: 17px;
  background: ${(p) => p.$c};
  & + & { border-top: 1px solid #000; }
`;
const Scale = styled.ul`
  list-style: none;
  margin: -8px 0 -8px -5px;
  padding: 0;
`;
const Tick = styled.li`
  height: 17px;
  line-height: 17px;
  display: flex;
  align-items: center;
  gap: 5px;
  &::before { content: ""; width: 6px; height: 1px; background: #000; }
`;
const Range = styled.dl`
  display: grid;
  grid-template-columns: 20px 12px 1fr;
  column-gap: 3px;
  margin: 8px 4px 0 0;
  padding: 0 0 1px 41px;
  border: 1px solid #d6def0;
  border-right-color: #a9acee;
  border-bottom-color: #a9acee;
  background: #f0f3fa;
  line-height: 17px;
  dt, dd { margin: 0; }
`;
const DetailBtn = styled.button`
  align-self: flex-end;
  margin-top: 136px;
  width: 25px;
  height: 21px;
  display: grid;
  place-items: center;
  border: 1px solid #adadad;
  background: #e4e4e4;
`;
const PanelTools = styled.div`
  display: flex;
  gap: 8px;
  height: 22px;
  padding-left: 1px;
`;
const LEGEND = ["r0", "r1", "or", "ol", "ye", "gr", "te", "cy", "lb", "bl", "db"];
const LEVELS = ["-0.19", "-0.24", "-0.29", "-0.33", "-0.38", "-0.43", "-0.48", "-0.52", "-0.57", "-0.62", "-0.67", "-0.71"];

/* ---------- result table ---------- */

const Results = styled.section`
  margin-top: 7px;
  display: flex;
  flex-direction: column;
  background: #f0f0f0;
`;
const ResultTools = styled.div`
  display: flex;
  align-items: center;
  height: 26px;
  padding-left: 8px;
  background: linear-gradient(#eef1f8, #dfe4ee 55%, #cdd3df);
  border-bottom: 1px solid #5b6069;
`;
const Sheet = styled.div`
  display: flex;
  margin: 2px 3px 0 2px;
  border-top: 1px solid #8a8a8a;
`;
const Table = styled.table`
  flex: 1;
  min-width: 0;
  table-layout: fixed;
  border-collapse: separate;
  border-spacing: 0;
  font: 11px/14px ${ARIAL};
  color: #000;
  th, td {
    padding: 0 4px 0 3px;
    height: 16px;
    border-right: 1px solid #a0a0a0;
    border-bottom: 1px solid #a0a0a0;
    white-space: nowrap;
    font-weight: normal;
    text-align: left;
  }
  thead th { text-align: center; background: #f0f0f0; }
`;
const Letter = styled.th`
  && { height: 14px; line-height: 12px; border-color: #6a6a6a; background: ${(p) => (p.$on ? "#0078d7" : "#e1e1e1")}; color: #111; }
`;
const RowHead = styled.th`
  && { background: ${(p) => (p.$on ? "#0078d7" : "#e1e1e1")}; border-right-color: #6a6a6a; border-bottom-color: #6a6a6a; }
`;
const Row = styled.tr`td { background: ${(p) => p.$bg}; }`;
const Desc = styled.td`
  && {
    padding-left: 27px;
    background:
      linear-gradient(#ccc, #ccc) 7px 0 / 1px 100% no-repeat,
      linear-gradient(#ccc, #ccc) 7px 7px / 12px 1px no-repeat,
      ${(p) => p.$bg};
  }
`;
const Num = styled.td`&& { text-align: right; }`;
const Blank = styled.td`&& { background: #f0f0f0; }`;
const Group = styled.td`
  && { background: #fff; font-weight: bold; font-size: 12px; border: 1px dotted #000; }
`;
const GroupHead = styled.span`
  display: flex;
  align-items: center;
  gap: 3px;
`;
const GroupBox = styled.button`
  width: 9px;
  height: 9px;
  border: 1px solid #000;
  background: linear-gradient(#000, #000) 1px 3px / 5px 1px no-repeat, #fff;
`;
const TableCheck = styled.input`
  appearance: none;
  display: inline-block;
  width: 11px;
  height: 11px;
  vertical-align: middle;
  border: 1px solid #555;
  background: #fff;
`;
const VScroll = styled.div`
  width: 17px;
  display: flex;
  flex-direction: column;
  align-items: center;
  justify-content: space-between;
`;
const VTop = styled.div`
  display: flex;
  flex-direction: column;
  align-items: center;
`;
const SheetTabs = styled.div`
  display: flex;
  height: 37px;
  margin-top: 7px;
  border-top: 1px solid #6a6a6a;
  font: 11px/16px ${ARIAL};
  color: #000;
`;
const SheetTab = styled.button`
  height: 18px;
  padding: 0 2px;
  border: 0;
  border-right: 1px solid #555;
  border-bottom: 1px solid #555;
  border-radius: 0 0 4px 4px;
  background: ${(p) => (p.$active ? "#f0f0f0" : "#e1e1e1")};
  white-space: nowrap;
`;

const A = "#f7f9fe";
const W = "#fff";
const ROWS = [
  ["Summe Belastung in Richtung X", "0.00", "kN", "", A],
  ["Summe Lagerkräfte in Richtung X", "0.00", "kN", "", A],
  ["Summe Belastung in Richtung Z", "32.02", "kN", "", W],
  ["Summe Lagerkräfte in Richtung Z", "32.02", "kN", "Abweichung:  0.00 %", W],
  ["Resultierende der Reaktionen um X", "0.000", "kNm", "Im Schwerpunkt des Modells (X: 12.120, Y: 0.000, Z: 10.746 m)", A],
  ["Resultierende der Reaktionen um Y", "-0.005", "kNm", "Im Schwerpunkt des Modells", "#e9e9e9"],
  ["Resultierende der Reaktionen um Z", "0.000", "kNm", "Im Schwerpunkt des Modells", W],
  ["Maximale Verschiebung in Richtung X", "0.3", "mm", "Stab Nr. 36,  x: 0.000 m", A],
  ["Maximale Verschiebung in Richtung Z", "2.0", "mm", "Stab Nr. 32,  x: 2.525 m", A],
  ["Maximale Verschiebung vektoriell", "2.0", "mm", "Stab Nr. 41,  x: 2.525 m", A],
  ["Maximale Verdrehung um Y-Achse", "-0.4", "mrad", "Stab Nr. 30,  x: 0.000 m", A],
  ["Berechnungstheorie", "I. Ordnung", "", "Theorie I. Ordnung (geometrisch lineare Berechnung)", W],
  ["Steifigkeitsreduzierung", null, "", "", W],
  ["Anzahl der Laststufen", "1", "", "", W],
];
const Pre = styled.span`white-space: pre;`;
const TABS = [
  "Ergebnisse - Zusammenfassung", "Knoten - Lagerkräfte", "Knoten - Verformungen", "Stäbe - Lokale Verformungen",
  "Stäbe - Globale Verformungen", "Stäbe - Schnittgrößen", "Stäbe - Verzerrungen", "Stäbe - Stabkennzahlen für Knicken",
  "Stabschlankheiten", "Querschnitte - Schnittgrößen", "Stabendgelenke - Verformungen", "Stabendgelenke - Kräfte",
];

const ResultTable = () => (
  <Table>
    <colgroup>
      <col width="46" /><col width="288" /><col width="72" /><col width="48" /><col width="396" /><col />
    </colgroup>
    <thead>
      <tr>
        <th rowSpan="2" aria-label="Zeile" />
        <Letter $on>A</Letter><Letter>B</Letter><Letter>C</Letter><Letter>D</Letter>
        <th aria-label="leer" />
      </tr>
      <tr>
        <th>Beschreibung</th><th>Wert</th><th>Einheit</th><th>Kommentar</th><th aria-label="leer" />
      </tr>
    </thead>
    <tbody>
      <tr>
        <RowHead $on aria-label="Gruppe" />
        <Group colSpan="4"><GroupHead><GroupBox aria-label="Gruppe zuklappen" />LF1 - Eigengewicht</GroupHead></Group>
        <Blank />
      </tr>
      {ROWS.map(([d, v, u, k, bg]) => (
        <Row key={d} $bg={bg}>
          <RowHead aria-label={d} />
          <Desc $bg={bg}>{d}</Desc>
          <Num>{v === null ? <TableCheck type="checkbox" aria-label={d} /> : v}</Num>
          <td>{u}</td>
          <td><Pre>{k}</Pre></td>
          <Blank />
        </Row>
      ))}
    </tbody>
  </Table>
);

/* ---------- status bar ---------- */

const StatusBar = styled.footer`
  display: flex;
  align-items: center;
  justify-content: flex-end;
  gap: 2px;
  height: 21px;
  border-top: 1px solid #a4a8b0;
  background: linear-gradient(#eceef2, #c3c8d1 40%, #abb0ba 50%, #b4b9c4 80%, #bec3cf);
  font: 11px/16px ${ARIAL};
  color: #2c2e33;
`;
const Flag = styled.button`
  height: 18px;
  padding: 0 2px;
  border: 1px solid;
  border-color: ${(p) => (p.$up ? "#fff #8d929b #8d929b #fff" : "#000 #fff #fff #000")};
  background: none;
`;
const Mode = styled.span`
  width: 186px;
`;
const Cell = styled.span`
  width: ${(p) => p.$w}px;
  height: 17px;
  border-left: 1px solid #8e939d;
`;

export default function App() {
  return (
    <Shell>
      <Global />
      <TitleBar>
        <Icon name="app" />
        RFEM 5.21.02 x64 - [Fachwerk*]
        <Spacer />
        <WinButtons>
          <WinButton aria-label="Minimieren"><svg width="11" height="11" stroke="#000"><path d="M0 5.500h11" /></svg></WinButton>
          <WinButton aria-label="Wiederherstellen"><svg width="11" height="11" stroke="#000" fill="none"><path d="M.5 2.500h8v8h-8zM2.500 2.500v-2h8v8h-2" /></svg></WinButton>
          <WinButton aria-label="Schließen"><svg width="11" height="11" stroke="#000"><path d="M.5 .5l10 10M10.500 .5l-10 10" /></svg></WinButton>
        </WinButtons>
      </TitleBar>
      <MenuBar>
        <Icon name="mdi" />
        <MenuList>
          {MENU.map(([a, b, c]) => (
            <MenuItem key={a + b + c} href="#">{a}<u>{b}</u>{c}</MenuItem>
          ))}
        </MenuList>
        <svg width="50" height="10" stroke="#555" fill="none" aria-hidden="true"><path d="M2 7.500h7M21.500 3.500h5v5h-5zM23.500 3.500v-2h5v5h-2M42 1l7 7M49 1l-7 7" /></svg>
      </MenuBar>
      <ToolRow>
        <Strip>
          <Grip $w={11} />
          <Tools items="fresh open boxO boxB save notes print preview | undo redo | para spot ring selWin selCopy | navOn* tabOn* | newLoad" />
          <LoadCase width={428} name="Lastfall" />
          <Tools items="prev next eyeTool xxDim eye* xx* | glasses abacusW abacus" />
        </Strip>
        <Strip>
          <Grip $w={12} />
          <Tools items="gridHand gridDot pl1 pl2 plHot* gridRed wrenchW | copyObj rotObj mirror cross infoW gearDoc gears" />
        </Strip>
      </ToolRow>
      <ToolRow>
        <Strip>
          <Grip $w={9} />
          <Tools items="node v line member v circle v | support lineSup found | dimX v dimXX box | surf v surf2 v open3 v solid solidN v | release v nodeLoad load1 load2 load3 load4 v" />
        </Strip>
        <Strip>
          <Grip $w={12} />
          <Tools items="hand zoomIn zoomX cube cubeHot* | axX axY axZ axMZ v scope v | clip v" />
        </Strip>
        <Strip>
          <Grip $w={12} />
          <Tools items="frameT tag | member3* surfC solidC react wings result v ibend stack | listHot* pen v rainbow v" />
        </Strip>
        <Strip>
          <Grip $w={12} />
          <Tools items="mod1 mod2 pdf1 pdf2" />
        </Strip>
      </ToolRow>
      <Main>
        <Navigator>
          <PaneTitle>Projekt-Navigator - Ergebnisse</PaneTitle>
          <NavTree />
          <HScroll>
            <ScrollBtn aria-label="Nach links"><Chevron d="M6 1L2.500 4.500 6 8" /></ScrollBtn>
            <ScrollThumb $w="275px" />
            <Spacer />
            <ScrollBtn aria-label="Nach rechts"><Chevron d="M3 1l3.500 3.500L3 8" /></ScrollBtn>
          </HScroll>
          <NavTabs>
            <NavTab><Icon name="daten" />Daten</NavTab>
            <NavTab><Icon name="zeigen" />Zeigen</NavTab>
            <NavTab><Icon name="ansichten" />Ansichten</NavTab>
            <NavTab $active><Icon name="ergebnisse" />Ergebnisse</NavTab>
          </NavTabs>
        </Navigator>
        <Work>
          <Upper>
            <View>
              <ViewNote>{"Sichtbarkeitsmodus\nSpannungen Sigma-x [kN/cm^2]\nLK1 : ULS"}</ViewNote>
              <ViewNote>Max Sigma-x: -0.19, Min Sigma-x: -0.71 kN/cm^2</ViewNote>
              <BeamScene />
            </View>
            <SidePanel>
              <PaneTitle>Panel</PaneTitle>
              <PanelBody>
                <PanelText>Spannungen</PanelText>
                <Unit>σ<sub>x</sub> [kN/cm<sup>2</sup> ]</Unit>
                <Legend>
                  <Swatches>{LEGEND.map((c) => <Swatch key={c} $c={C[c]} />)}</Swatches>
                  <Scale>{LEVELS.map((l) => <Tick key={l}>{l}</Tick>)}</Scale>
                </Legend>
                <Range>
                  {[["Max", "-0.19"], ["Min", "-0.71"]].map(([k, v]) => (
                    <Fragment key={k}><dt>{k}</dt><dd>&nbsp;:</dd><dd>{v}</dd></Fragment>
                  ))}
                </Range>
                <DetailBtn aria-label="Details"><Icon name="detail" /></DetailBtn>
              </PanelBody>
              <PanelTools>
                <Tools items="legend scale micro" />
              </PanelTools>
            </SidePanel>
          </Upper>
          <Results>
            <PaneTitle h={19}>4.0 Ergebnisse - Zusammenfassung</PaneTitle>
            <ResultTools>
              <Tools items="tEdit tPlus tDown tRes* tWave | tLeft tRight | hook1* hook2* | tRows tPen |" />
              <LoadCase width={133} name="Lastfall der Tabelle" />
              <Tools items="| prev next | filter | infoDim | bars~ | excel | calc" />
            </ResultTools>
            <Sheet>
              <ResultTable />
              <VScroll>
                <VTop>
                  <ScrollBtn aria-label="Nach oben"><Chevron d="M1 6l3.500-3.500L8 6" /></ScrollBtn>
                  <ScrollThumb $w="15px" $h="25px" />
                </VTop>
                <ScrollBtn aria-label="Nach unten"><Chevron d="M1 3l3.500 3.500L8 3" /></ScrollBtn>
              </VScroll>
            </Sheet>
            <SheetTabs>
              {TABS.map((t, i) => <SheetTab key={t} $active={i === 0}>{t}</SheetTab>)}
            </SheetTabs>
          </Results>
        </Work>
      </Main>
      <StatusBar>
        <Flag>FANG</Flag><Flag $up>RASTER</Flag><Flag>KARTES</Flag><Flag>OFANG</Flag><Flag>HLINIEN</Flag><Flag>DXF</Flag>
        <Mode>Sichtbarkeitsmodus</Mode>
        <Cell $w={86} /><Cell $w={72} /><Cell $w={73} /><Cell $w={70} />
      </StatusBar>
    </Shell>
  );
}
